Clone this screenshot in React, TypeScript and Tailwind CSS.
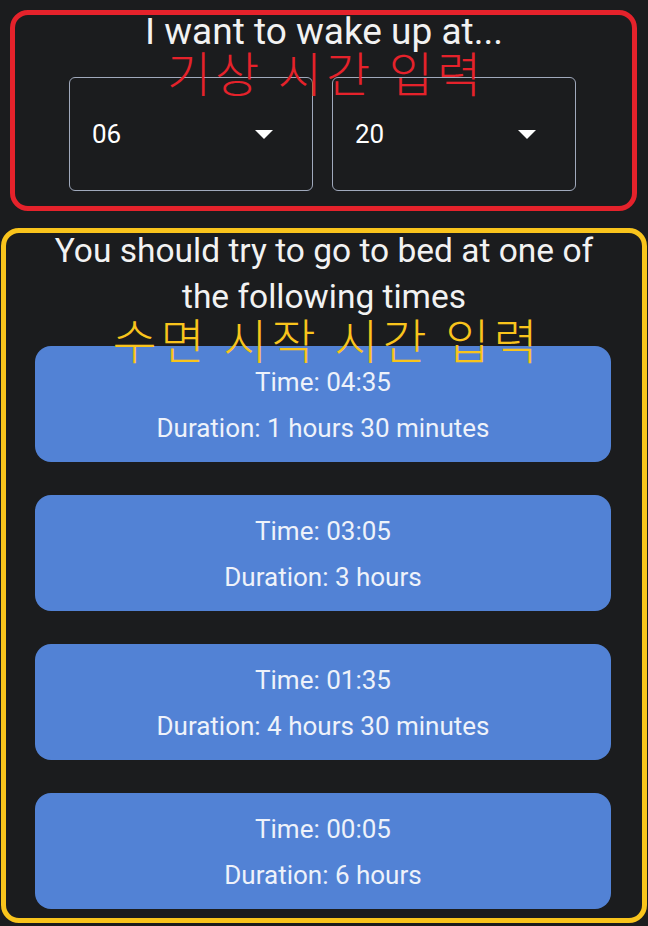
import { useState } from "react";

type BedTime = { time: string; duration: string };

const BED_TIMES: BedTime[] = [
  { time: "04:35", duration: "1 hours 30 minutes" },
  { time: "03:05", duration: "3 hours" },
  { time: "01:35", duration: "4 hours 30 minutes" },
  { time: "00:05", duration: "6 hours" },
];

function DropArrow() {
  return (
    <svg width="18" height="9" viewBox="0 0 18 9" aria-hidden="true">
      <polygon points="0,0 18,0 9,9" fill="#ffffff" />
    </svg>
  );
}

function TimeSelect({ value }: { value: string }) {
  return (
    <div className="flex h-[114px] w-[244px] items-center justify-between rounded-[6px] border-[1.5px] border-[#a0a9bc] pl-[22px] pr-[39px]">
      <span className="text-[26px] leading-none text-white">{value}</span>
      <DropArrow />
    </div>
  );
}

export default function App() {
  const [hour] = useState("06");
  const [minute] = useState("20");

  return (
    <div className="relative h-[926px] w-[648px] overflow-hidden bg-[#1b1c1e] font-['Roboto','Noto_Sans_CJK_KR',sans-serif]">
      {/* wake-up picker */}
      <section className="pt-[10px]">
        <h1 className="text-center text-[37px] leading-[44px] text-[#f2f2f2]">I want to wake up at...</h1>
        <div className="mt-[23px] flex gap-[19px] pl-[69px]">
          <TimeSelect value={hour} />
          <TimeSelect value={minute} />
        </div>
      </section>

      {/* suggested bed times */}
      <section className="mt-[37px]">
        <h2 className="px-[40px] text-center text-[33.5px] leading-[46px] text-[#f2f2f2]">
          You should try to go to bed at one of the following times
        </h2>
        <div className="mt-[26px] flex flex-col gap-[33px] pl-[35px]">
          {BED_TIMES.map((b) => (
            <div
              key={b.time}
              className="w-[576px] rounded-[16px] bg-[#5282d5] pb-[11px] pt-[14px] text-center text-[26px] leading-[45.5px] text-[#eef2fa]"
            >
              <p>Time: {b.time}</p>
              <p>Duration: {b.duration}</p>
            </div>
          ))}
        </div>
      </section>

      {/* section frames and labels */}
      <div className="pointer-events-none absolute left-[10px] top-[10px] h-[201px] w-[627px] rounded-[18px] border-[5px] border-[#e5222b]" />
      <div className="pointer-events-none absolute left-[1px] top-[228px] h-[695px] w-[646px] rounded-[18px] border-[5px] border-[#f9c41c]" />
      <p className="pointer-events-none absolute left-[4px] right-0 top-[47px] text-center font-['Noto_Sans_CJK_KR',sans-serif] text-[48px] font-light leading-[48px] tracking-[4px] text-[#e5222b]">
        기상 시간 입력
      </p>
      <p className="pointer-events-none absolute left-[6px] right-0 top-[314px] text-center font-['Noto_Sans_CJK_KR',sans-serif] text-[48px] font-light leading-[48px] tracking-[4px] text-[#f9c41c]">
        수면 시작 시간 입력
      </p>
    </div>
  );
}
